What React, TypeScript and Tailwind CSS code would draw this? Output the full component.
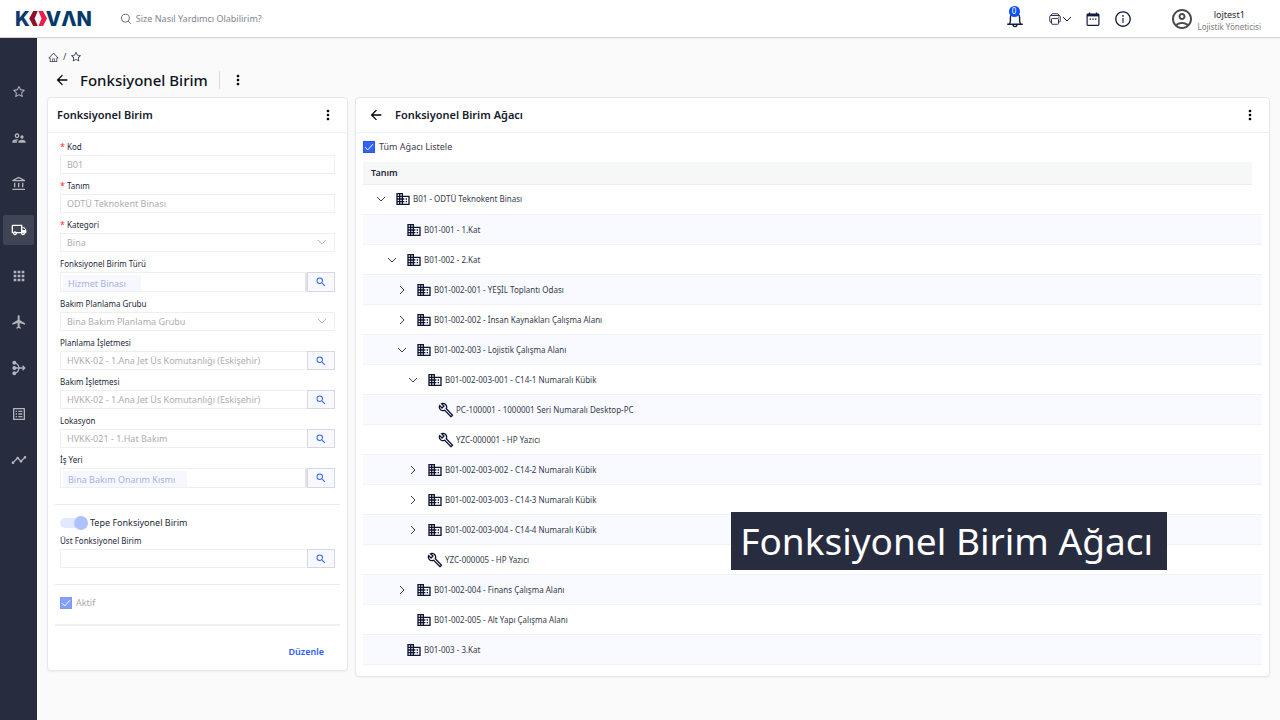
import { useState } from 'react';
import type { ReactNode } from 'react';
import { AiOutlineHome, AiOutlineInfoCircle, AiOutlineStar } from 'react-icons/ai';
import { IoPrintOutline } from 'react-icons/io5';
import {
  MdApps,
  MdArrowBack,
  MdFlight,
  MdListAlt,
  MdMediation,
  MdMoreVert,
  MdOutlineAccountBalance,
  MdOutlineAccountCircle,
  MdOutlineBuild,
  MdOutlineBusiness,
  MdOutlineLocalShipping,
  MdOutlineSupervisorAccount,
  MdSearch,
  MdTimeline,
} from 'react-icons/md';

const navItems = [
  { id: 'favorites', icon: AiOutlineStar },
  { id: 'people', icon: MdOutlineSupervisorAccount },
  { id: 'finance', icon: MdOutlineAccountBalance },
  { id: 'logistics', icon: MdOutlineLocalShipping },
  { id: 'apps', icon: MdApps },
  { id: 'flight', icon: MdFlight },
  { id: 'flow', icon: MdMediation },
  { id: 'lists', icon: MdListAlt },
  { id: 'trends', icon: MdTimeline },
];

interface TreeNode {
  label: string;
  level: number;
  kind: 'unit' | 'equipment';
  state?: 'open' | 'closed';
}

const nodes: TreeNode[] = [
  { label: 'B01 - ODTÜ Teknokent Binası', level: 0, kind: 'unit', state: 'open' },
  { label: 'B01-001 - 1.Kat', level: 1, kind: 'unit' },
  { label: 'B01-002 - 2.Kat', level: 1, kind: 'unit', state: 'open' },
  { label: 'B01-002-001 - YEŞİL Toplantı Odası', level: 2, kind: 'unit', state: 'closed' },
  { label: 'B01-002-002 - İnsan Kaynakları Çalışma Alanı', level: 2, kind: 'unit', state: 'closed' },
  { label: 'B01-002-003 - Lojistik Çalışma Alanı', level: 2, kind: 'unit', state: 'open' },
  { label: 'B01-002-003-001 - C14-1 Numaralı Kübik', level: 3, kind: 'unit', state: 'open' },
  { label: 'PC-100001 - 1000001 Seri Numaralı Desktop-PC', level: 4, kind: 'equipment' },
  { label: 'YZC-000001 - HP Yazıcı', level: 4, kind: 'equipment' },
  { label: 'B01-002-003-002 - C14-2 Numaralı Kübik', level: 3, kind: 'unit', state: 'closed' },
  { label: 'B01-002-003-003 - C14-3 Numaralı Kübik', level: 3, kind: 'unit', state: 'closed' },
  { label: 'B01-002-003-004 - C14-4 Numaralı Kübik', level: 3, kind: 'unit', state: 'closed' },
  { label: 'YZC-000005 - HP Yazıcı', level: 3, kind: 'equipment' },
  { label: 'B01-002-004 - Finans Çalışma Alanı', level: 2, kind: 'unit', state: 'closed' },
  { label: 'B01-002-005 - Alt Yapı Çalışma Alanı', level: 2, kind: 'unit' },
  { label: 'B01-003 - 3.Kat', level: 1, kind: 'unit' },
];

const indents = ['pl-0', 'pl-[11px]', 'pl-[21px]', 'pl-8', 'pl-[43px]'];

function Logo() {
  return (
    <a href="#" className="flex h-5 items-center font-['Inter'] text-xl leading-5 font-extrabold text-[#053a6b]">
      K
      <svg viewBox="0 0 18 15" className="-mx-px h-[15px] w-[18px]">
        <path d="M4.2 0h4.6L5.6 7.5 8.8 15H4.2L.2 7.5z" fill="#8e1230" />
        <path d="M9.4 0H14l4 7.5-4 7.5H9.4l3.2-7.5z" fill="#ee1c4a" />
      </svg>
      <span>VΛN</span>
    </a>
  );
}

function ChevronDown({ className }: { className: string }) {
  return (
    <svg viewBox="0 0 10 10" className={className}>
      <path d="M1 3l4 4 4-4" fill="none" stroke="currentColor" />
    </svg>
  );
}

function ChevronRight({ className }: { className: string }) {
  return (
    <svg viewBox="0 0 10 10" className={className}>
      <path d="M3 1l4 4-4 4" fill="none" stroke="currentColor" />
    </svg>
  );
}

function BellIcon() {
  return (
    <svg viewBox="0 0 18 18" className="size-[18px]" fill="none" stroke="currentColor" strokeWidth="1.4">
      <path d="M1.2 14.2h15.6M3.4 14l1-2.6V7.5a4.6 4.6 0 0 1 9.2 0v3.9l1 2.6" />
      <path d="M7 14.6a2 2 0 0 0 4 0" />
    </svg>
  );
}

function CalendarIcon() {
  return (
    <svg viewBox="0 0 14 14" className="size-[14px]" fill="none" stroke="currentColor">
      <rect x="1.1" y="2.1" width="11.8" height="11.2" rx="0.8" strokeWidth="1.2" />
      <path d="M1 3.2h12" strokeWidth="2.4" />
      <path d="M3.5 0.4v2M10.5 0.4v2" strokeWidth="1.4" />
      <path d="M3.6 7.2h1.4M6.3 7.2h1.4M9 7.2h1.4" strokeWidth="1.2" />
    </svg>
  );
}

function Header() {
  return (
    <header className="relative z-10 flex h-[38px] items-center border-b border-[#d4d4d6] bg-white pr-[19px] pl-[15px] shadow-xs">
      <Logo />
      <label className="ml-7 flex items-center gap-1 text-[#6b6b6b]">
        <svg viewBox="0 0 12 12" className="size-3" fill="none" stroke="currentColor">
          <circle cx="5.4" cy="5.2" r="4" />
          <path d="M8.3 8.1l2.6 2.7" />
        </svg>
        <input
          type="text"
          placeholder="Size Nasıl Yardımcı Olabilirim?"
          className="w-60 text-[9px] leading-4 outline-none placeholder:text-[#80858d]"
        />
      </label>
      <div className="ml-auto flex items-center text-[#131c3c]">
        <button className="relative">
          <BellIcon />
          <span className="absolute -top-1 left-[3px] flex size-[11px] items-center justify-center rounded-full bg-[#0a50ff] text-[8px] leading-none text-white">
            0
          </span>
        </button>
        <button className="ml-6 flex items-center">
          <IoPrintOutline className="size-[14px]" />
          <ChevronDown className="size-[10px]" />
        </button>
        <button className="ml-[14px]">
          <CalendarIcon />
        </button>
        <button className="ml-[14px]">
          <AiOutlineInfoCircle className="size-[18px]" />
        </button>
        <div className="ml-[38px] flex items-center gap-1">
          <MdOutlineAccountCircle className="size-6 text-[#4a4a4a]" />
          <div className="pt-1 text-center">
            <div className="text-[9px] leading-3 text-[#222733]">lojtest1</div>
            <div className="text-[8px] leading-3 text-[#7d7d7d]">Lojistik Yöneticisi</div>
          </div>
        </div>
      </div>
    </header>
  );
}

function Sidebar() {
  return (
    <nav className="flex w-[37px] shrink-0 flex-col items-center gap-4 bg-[#272c3f] pt-[39px]">
      {navItems.map(({ id, icon: Icon }) => (
        <button
          key={id}
          className={
            id === 'logistics'
              ? 'flex h-[30px] w-[31px] items-center justify-center rounded-xs bg-[#3f4555] text-white'
              : 'flex h-[30px] w-[31px] items-center justify-center text-[#b3b5bd]'
          }
        >
          <Icon className={id === 'favorites' ? 'size-[14px]' : 'size-4'} />
        </button>
      ))}
    </nav>
  );
}

interface FieldProps {
  id: string;
  label: string;
  required?: boolean;
  children: ReactNode;
}

function Field({ id, label, required, children }: FieldProps) {
  return (
    <div>
      <label htmlFor={id} className="flex h-4 items-center text-[8px] leading-4 text-[#232938]">
        {required && <span className="w-[7px] text-[9px] text-red-500">*</span>}
        {label}
      </label>
      {children}
    </div>
  );
}

const boxStyle = 'border border-[#efefef] bg-white text-[9px] text-[#adadb0] outline-none';

function TextField({ id, label, value }: { id: string; label: string; value: string }) {
  return (
    <Field id={id} label={label} required>
      <input id={id} type="text" disabled value={value} className={`block h-[19px] w-full px-1.5 ${boxStyle}`} />
    </Field>
  );
}

function SelectField({ id, label, value, required }: { id: string; label: string; value: string; required?: boolean }) {
  return (
    <Field id={id} label={label} required={required}>
      <div className="relative">
        <select id={id} disabled className={`block h-[19px] w-full appearance-none px-1.5 opacity-100 ${boxStyle}`}>
          <option>{value}</option>
        </select>
        <ChevronDown className="absolute top-1 right-2 size-[10px] text-[#b4b4b8]" />
      </div>
    </Field>
  );
}

interface LookupFieldProps {
  id: string;
  label: string;
  value?: string;
  tag?: string;
  tagWidth?: string;
}

function LookupField({ id, label, value = '', tag, tagWidth }: LookupFieldProps) {
  return (
    <Field id={id} label={label}>
      <div className={tag ? 'flex h-5' : 'flex h-[19px]'}>
        {tag ? (
          <div className={`flex min-w-0 flex-1 items-end border-r-0 pl-0.5 ${boxStyle}`}>
            <input
              id={id}
              type="text"
              readOnly
              value={tag}
              className={`h-4 bg-[#f7f8ff] pl-[5px] text-[#a8b1e2] outline-none ${tagWidth}`}
            />
            <span className="ml-auto h-full w-0.5 bg-[#e2e2e2]" />
          </div>
        ) : (
          <input id={id} type="text" disabled value={value} className={`min-w-0 flex-1 border-r-0 px-1.5 ${boxStyle}`} />
        )}
        <button className="flex w-7 items-center justify-center border border-[#d5d8e4] bg-[#f8f9ff] text-[#3563ff]">
          <MdSearch className="size-3" />
        </button>
      </div>
    </Field>
  );
}

interface CheckboxProps {
  id: string;
  label: string;
  disabled?: boolean;
}

function Checkbox({ id, label, disabled }: CheckboxProps) {
  const [checked, setChecked] = useState(true);
  return (
    <label htmlFor={id} className={disabled ? 'flex items-center gap-1 text-[9px] text-[#a9a9ad]' : 'flex items-center gap-1 text-[9px] text-[#3a404c]'}>
      <span className={disabled ? 'relative size-3 opacity-60' : 'relative size-3'}>
        <input
          id={id}
          type="checkbox"
          disabled={disabled}
          checked={checked}
          onChange={(e) => setChecked(e.target.checked)}
          className="block size-3 appearance-none border border-[#2a55ee] bg-white checked:bg-[#2f62ff]"
        />
        {checked && (
          <svg viewBox="0 0 12 12" className="pointer-events-none absolute inset-0 size-3">
            <path d="M2 6.2l2.7 2.7L10 3.2" fill="none" stroke="#fff" />
          </svg>
        )}
      </span>
      {label}
    </label>
  );
}

function DetailPanel() {
  return (
    <section className="w-[301px] shrink-0 rounded border border-[#e8e8ea] bg-white shadow-xs">
      <div className="flex h-[35px] items-center justify-between border-b border-[#f0f0f0] pr-[11px] pl-[9px]">
        <h2 className="text-[11px] font-semibold text-[#141a2b]">Fonksiyonel Birim</h2>
        <button>
          <MdMoreVert className="size-4 text-black" />
        </button>
      </div>
      <div className="px-[7px] pt-1.5">
        <div className="flex flex-col gap-1 px-[5px]">
          <TextField id="kod" label="Kod" value="B01" />
          <TextField id="tanim" label="Tanım" value="ODTÜ Teknokent Binası" />
          <SelectField id="kategori" label="Kategori" value="Bina" required />
          <LookupField id="tur" label="Fonksiyonel Birim Türü" tag="Hizmet Binası" tagWidth="w-[78px]" />
          <SelectField id="grup" label="Bakım Planlama Grubu" value="Bina Bakım Planlama Grubu" />
          <LookupField id="planlama" label="Planlama İşletmesi" value="HVKK-02 - 1.Ana Jet Üs Komutanlığı (Eskişehir)" />
          <LookupField id="bakim" label="Bakım İşletmesi" value="HVKK-02 - 1.Ana Jet Üs Komutanlığı (Eskişehir)" />
          <LookupField id="lokasyon" label="Lokasyon" value="HVKK-021 - 1.Hat Bakım" />
          <LookupField id="isyeri" label="İş Yeri" tag="Bina Bakım Onarım Kısmı" tagWidth="w-[124px]" />
        </div>

        <div className="mt-4 border-t border-[#ebebeb] px-[5px] pt-2.5 pb-4">
          <label htmlFor="tepe" className="flex h-4 items-center gap-0.5 text-[9px] text-[#232938]">
            <span className="relative h-[14px] w-7">
              <input
                id="tepe"
                type="checkbox"
                role="switch"
                disabled
                checked
                readOnly
                className="my-0.5 block h-2.5 w-[27px] appearance-none rounded-full bg-[#e2e8ff]"
              />
              <span className="absolute top-0 right-0 size-[14px] rounded-full bg-[#afc1ff]" />
            </span>
            Tepe Fonksiyonel Birim
          </label>
          <div className="mt-0.5">
            <LookupField id="ust" label="Üst Fonksiyonel Birim" />
          </div>
        </div>

        <div className="border-t border-[#ebebeb] px-[5px] pt-[11px] pb-[14px]">
          <Checkbox id="aktif" label="Aktif" disabled />
        </div>

        <div className="flex justify-end border-t-2 border-[#f0f0f0] pt-[18px] pr-4 pb-[10px]">
          <button className="text-[9px] leading-4 font-semibold text-[#2f5bff]">Düzenle</button>
        </div>
      </div>
    </section>
  );
}

function TreeRow({ node }: { node: TreeNode }) {
  const Chevron = node.state === 'open' ? ChevronDown : ChevronRight;
  const Icon = node.kind === 'unit' ? MdOutlineBusiness : MdOutlineBuild;
  return (
    <tr className="even:bg-[#f8faff]">
      <td className="h-[30px] border-b border-[#f0f2f3] p-0">
        <div className={`flex items-center ${indents[node.level]}`}>
          <span className="flex w-8 items-center pl-[13px]">
            {node.state && (
              <button className="block">
                <Chevron className="size-[10px] text-[#3c3f48]" />
              </button>
            )}
          </span>
          <Icon className="size-4 text-[#0f1530]" />
          <span className="ml-0.5 text-[8px] leading-4 text-[#333a48]">{node.label}</span>
        </div>
      </td>
    </tr>
  );
}

function TreePanel() {
  return (
    <section className="min-w-0 flex-1 rounded border border-[#e8e8ea] bg-white shadow-xs">
      <div className="flex h-[35px] items-center border-b border-[#f0f0f0] pr-[11px] pl-3">
        <button>
          <MdArrowBack className="size-4 text-black" />
        </button>
        <h2 className="ml-[11px] text-[11px] font-semibold text-[#141a2b]">Fonksiyonel Birim Ağacı</h2>
        <button className="ml-auto">
          <MdMoreVert className="size-4 text-black" />
        </button>
      </div>
      <div className="px-[7px] pt-[7px] pb-[11px]">
        <Checkbox id="tumu" label="Tüm Ağacı Listele" />
        <table className="mt-2 w-full border-collapse">
          <thead>
            <tr>
              <th className="p-0 text-left">
                <div className="mr-[10px] border-b border-[#eeeeee] bg-[#f6f7f7] pl-2 text-[9px] leading-[22px] font-semibold text-[#232938]">
                  Tanım
                </div>
              </th>
            </tr>
          </thead>
          <tbody>
            {nodes.map((node) => (
              <TreeRow key={node.label} node={node} />
            ))}
          </tbody>
        </table>
      </div>
    </section>
  );
}

export default function App() {
  return (
    <div className="relative flex min-h-screen flex-col bg-[#fafafa] font-['Noto_Sans',sans-serif]">
      <Header />
      <div className="flex flex-1">
        <Sidebar />
        <main className="min-w-0 flex-1 px-[10px] pb-8">
          <div className="flex items-center pt-[13px] pl-px text-[#363c4a]">
            <a href="#">
              <AiOutlineHome className="size-[11px]" />
            </a>
            <span className="mx-1 text-[9px] leading-3">/</span>
            <a href="#">
              <AiOutlineStar className="size-3" />
            </a>
          </div>
          <div className="flex h-[34px] items-center pl-[7px]">
            <button>
              <MdArrowBack className="size-4 text-black" />
            </button>
            <h1 className="ml-[10px] text-[15px] font-medium text-[#0d1322]">Fonksiyonel Birim</h1>
            <span className="ml-[11px] h-[18px] w-px bg-[#dcdcdc]" />
            <button className="ml-[10px]">
              <MdMoreVert className="size-4 text-black" />
            </button>
          </div>
          <div className="flex items-start gap-[7px]">
            <DetailPanel />
            <TreePanel />
          </div>
        </main>
      </div>
      <div className="absolute top-[512px] right-[113px] z-20 bg-[#272c3f] pr-[14px] pl-[9px] text-[37px] leading-[58px] text-white">
        Fonksiyonel Birim Ağacı
      </div>
    </div>
  );
}
